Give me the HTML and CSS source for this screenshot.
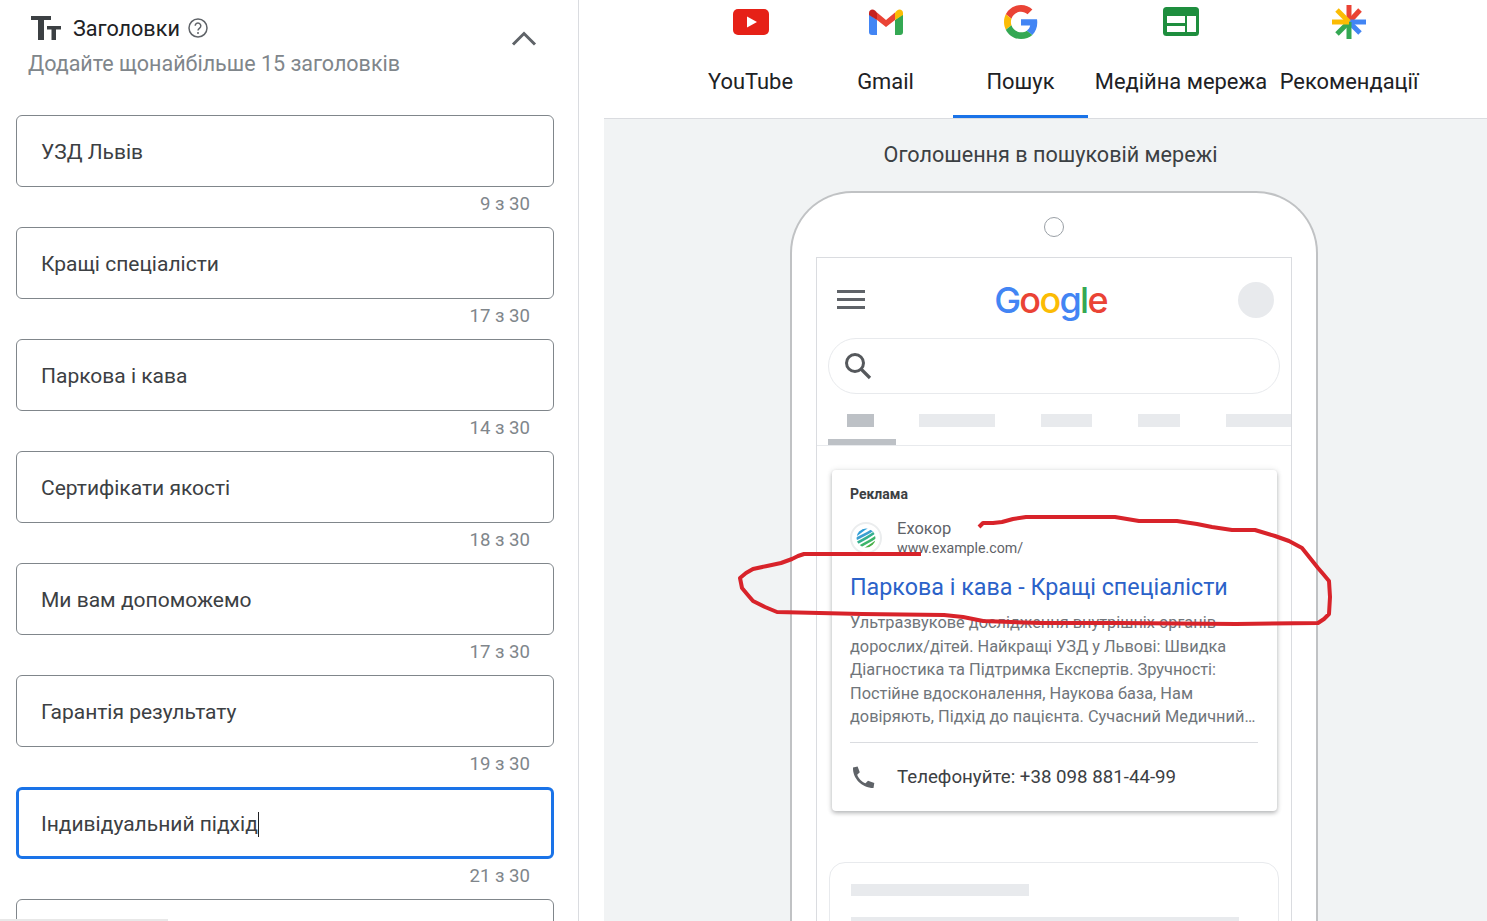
FILE: index.html
```html
<!DOCTYPE html>
<html lang="uk">
<head>
    <meta charset="UTF-8">
    <meta name="viewport" content="width=device-width, initial-scale=1.0">
    <title>Заголовки</title>
    <link rel="stylesheet" href="styles.css">
</head>
<body>

<div class="editor">
    <div class="section-head">
        <div class="section-info">
            <div class="section-title">
                <svg class="title-icon" width="30" height="24" viewBox="0 0 30 24"><path d="M0 0h20v4h-7v20H7V4H0zM16 10h14v3.500h-5V24h-4.500V13.500H16z" fill="#3c4043"/></svg>
                <span>Заголовки</span>
                <svg class="help-icon" width="20" height="20" viewBox="0 0 20 20"><circle cx="10" cy="10" r="9" fill="none" stroke="#5f6368" stroke-width="1.500"/><path d="M7.200 7.800a2.800 2.800 0 1 1 4.400 2.300c-1 .7-1.600 1.200-1.600 2.400" fill="none" stroke="#5f6368" stroke-width="1.500"/><circle cx="10" cy="15" r="1" fill="#5f6368"/></svg>
            </div>
            <div class="section-hint">Додайте щонайбільше 15 заголовків</div>
        </div>
        <svg class="collapse-icon" width="26" height="16" viewBox="0 0 26 16"><path d="M2 14.500 13 3.500l11 11" fill="none" stroke="#5f6368" stroke-width="3"/></svg>
    </div>

    <div class="field">УЗД Львів</div>
    <div class="counter">9 з 30</div>
    <div class="field">Кращі спеціалісти</div>
    <div class="counter">17 з 30</div>
    <div class="field">Паркова і кава</div>
    <div class="counter">14 з 30</div>
    <div class="field">Сертифікати якості</div>
    <div class="counter">18 з 30</div>
    <div class="field">Ми вам допоможемо</div>
    <div class="counter">17 з 30</div>
    <div class="field">Гарантія результату</div>
    <div class="counter">19 з 30</div>
    <div class="field field-active"><span class="caret">Індивідуальний підхід</span></div>
    <div class="counter">21 з 30</div>
    <div class="field"></div>
</div>
<div class="edge-bar"></div>

<div class="preview">
    <div class="tabs">
        <div class="tab">
            <svg width="36" height="26" viewBox="0 0 36 26"><rect width="36" height="26" rx="5" fill="#e62117"/><path d="M14 7.500 24 13l-10 5.500z" fill="#fff"/></svg>
            <span>YouTube</span>
        </div>
        <div class="tab">
            <svg width="34" height="26" viewBox="0 0 34 26"><path d="M0 5v18a3 3 0 0 0 3 3h5V11z" fill="#4285f4"/><path d="M34 5v18a3 3 0 0 1-3 3h-5V11z" fill="#34a853"/><path d="M8 3.500 17 11l9-7.500V11l-9 7-9-7z" fill="#ea4335"/><path d="M26 3.500 28 1.500C30.500-.8 34 .8 34 4v2l-8 5z" fill="#fbbc04"/><path d="M8 3.500 6 1.500C3.500-.8 0 .8 0 4v2l8 5z" fill="#c5221f"/></svg>
            <span>Gmail</span>
        </div>
        <div class="tab tab-active">
            <svg class="tab-g" width="34" height="34" viewBox="0 0 48 48"><path d="M24 9.500c3.540 0 6.710 1.220 9.210 3.600l6.850-6.850C35.900 2.380 30.470 0 24 0 14.620 0 6.510 5.380 2.560 13.220l7.980 6.190C12.430 13.720 17.740 9.500 24 9.500z" fill="#ea4335"/><path d="M46.980 24.550c0-1.570-.15-3.090-.38-4.550H24v9.020h12.940c-.58 2.960-2.260 5.480-4.780 7.180l7.730 6c4.510-4.180 7.090-10.360 7.090-17.650z" fill="#4285f4"/><path d="M10.530 28.590c-.48-1.450-.76-2.990-.76-4.590s.27-3.140.76-4.590l-7.980-6.190C.92 16.460 0 20.120 0 24c0 3.880.92 7.540 2.560 10.780l7.970-6.190z" fill="#fbbc05"/><path d="M24 48c6.480 0 11.930-2.130 16.020-5.810l-7.730-6c-2.150 1.450-4.920 2.300-8.290 2.300-6.260 0-11.570-4.220-13.470-9.910l-7.980 6.190C6.510 42.620 14.620 48 24 48z" fill="#34a853"/></svg>
            <span>Пошук</span>
        </div>
        <div class="tab tab-wide">
            <svg width="36" height="29" viewBox="0 0 36 29"><rect width="36" height="29" rx="3.500" fill="#1e8e3e"/><path d="M4 9h18v7H4zM4 19h18v6H4zM24 9h9v16h-9z" fill="#fff"/></svg>
            <span>Медійна мережа</span>
        </div>
        <div class="tab tab-reco">
            <svg width="36" height="36" viewBox="0 0 36 36" stroke-width="5"><path d="M18 18V1" stroke="#ea4335"/><path d="M18 18 29 6" stroke="#ea4335"/><path d="M18 18h17" stroke="#4285f4"/><path d="M18 18l11 11" stroke="#4285f4"/><path d="M18 18v17" stroke="#34a853"/><path d="M18 18 6 30" stroke="#34a853"/><path d="M18 18H1" stroke="#fbbc04"/><path d="M18 18 6 6" stroke="#fbbc04"/></svg>
            <span>Рекомендації</span>
        </div>
    </div>

    <div class="stage">
        <div class="stage-title">Оголошення в пошуковій мережі</div>
        <div class="phone">
            <div class="camera"></div>
            <div class="screen">
                <div class="top-bar">
                    <div class="burger"><i></i><i></i><i></i></div>
                    <div class="google-logo"><b class="c-blue">G</b><b class="c-red">o</b><b class="c-yellow">o</b><b class="c-blue">g</b><b class="c-green">l</b><b class="c-red">e</b></div>
                    <div class="avatar"></div>
                </div>
                <div class="search-box">
                    <svg width="30" height="30" viewBox="0 0 30 30"><circle cx="12" cy="12" r="8.500" fill="none" stroke="#55585c" stroke-width="3"/><path d="M18 18l9 9" stroke="#55585c" stroke-width="3.200"/></svg>
                </div>
                <div class="chips">
                    <i class="chip chip-on"></i>
                    <i class="chip chip-2"></i>
                    <i class="chip chip-3"></i>
                    <i class="chip chip-4"></i>
                    <i class="chip chip-5"></i>
                </div>
                <div class="chip-line"><i></i></div>

                <div class="ad-card">
                    <div class="ad-label">Реклама</div>
                    <div class="ad-source">
                        <div class="ad-logo">
                            <svg width="20" height="20" viewBox="0 0 20 20">
                                <defs><clipPath id="ball"><circle cx="10" cy="10" r="9.500"/></clipPath></defs>
                                <g clip-path="url(#ball)" fill="none" stroke-width="2.600">
                                    <path d="M0 7C4 5 7 1 12-1" stroke="#2f9fd8"/>
                                    <path d="M0 11C6 8 11 6 20 0" stroke="#3a9fd0"/>
                                    <path d="M1 15C7 12 13 9 21 3" stroke="#35b08f"/>
                                    <path d="M3 19C9 15 15 13 21 8" stroke="#3cb56a"/>
                                    <path d="M9 21C13 18 17 16 21 13" stroke="#4ab04a"/>
                                </g>
                            </svg>
                        </div>
                        <div>
                            <div class="ad-name">Ехокор</div>
                            <div class="ad-url">www.example.com/</div>
                        </div>
                    </div>
                    <div class="ad-headline">Паркова і кава - Кращі спеціалісти</div>
                    <div class="ad-text">Ультразвукове дослідження внутрішніх органів дорослих/дітей. Найкращі УЗД у Львові: Швидка Діагностика та Підтримка Експертів. Зручності: Постійне вдосконалення, Наукова база, Нам довіряють, Підхід до пацієнта. Сучасний Медичний…</div>
                    <div class="ad-call">
                        <svg width="24" height="24" viewBox="0 0 24 24"><path d="M6.600 1.500 2 2.500C1.500 13 10.500 23 22.500 23l.8-5-6.300-2.300-2.500 2.500C11 17 7.500 13.500 6.200 9.700l2.600-2.500z" fill="#5f6368"/></svg>
                        <span>Телефонуйте: +38 098 881-44-99</span>
                    </div>
                </div>

                <div class="ghost-card">
                    <i class="ghost-line ghost-short"></i>
                    <i class="ghost-line"></i>
                </div>
            </div>
        </div>
    </div>
</div>

<!-- hand drawn mark on top of the ad -->
<svg class="scribble" width="1487" height="921" viewBox="0 0 1487 921"><path d="M979 527l4-4 10 0 9-1 11-3 13-2 35 0 54 0 12 2 12 2 38 0 20 3 15 3 20 3 23 0 20 6 14 5 13 7 8 10 4 5 4 5 6 7 5 6 1 16-1 17-5 5-6 4-82 1-117-1-78 0-30-1-28-1-20-4-19-2-82-1-85-2-12-5-12-6-6-7-5-6-2-10 6-5 7-4 14-3 14-3 11-4 6-3 6-2 117 0" fill="none" stroke="#d8232a" stroke-width="4" stroke-linejoin="round"/></svg>

</body>
</html>
```
FILE: styles.css
```css
* {
    box-sizing: border-box;
}

html, body {
    height: 100%;
}

body {
    margin: 0;
    height: 921px;
    overflow: hidden;
    display: flex;
    background-color: #fff;
    font-family: Roboto, sans-serif;
    color: #3c4043;
}

/* left column */
.editor {
    width: 579px;
    flex-shrink: 0;
    height: 921px;
    overflow: hidden;
    padding: 0 24px 0 16px;
    border-right: 1px solid #dadce0;
}

.section-head {
    height: 115px;
    padding: 14px 17px 0 12px;
    display: flex;
    justify-content: space-between;
    align-items: flex-start;
}

.section-title {
    display: flex;
    align-items: center;
    gap: 8px;
    height: 28px;
    padding-left: 3px;
    font-size: 21.600px;
    color: #202124;
}

.title-icon {
    margin-right: 4px;
}

.section-hint {
    margin-top: 9px;
    font-size: 21.500px;
    color: #80868b;
}

.collapse-icon {
    margin-top: 16px;
}

.field {
    height: 72px;
    padding: 2px 0 0 24px;
    display: flex;
    align-items: center;
    border: 1px solid #80868b;
    border-radius: 6px;
    font-size: 21px;
}

.field-active {
    border: 3px solid #1a73e8;
    padding-left: 22px;
}

.caret {
    border-right: 1px solid #202124;
    line-height: 25px;
}

.counter {
    height: 40px;
    padding: 6px 24px 0 0;
    text-align: right;
    font-size: 18.600px;
    color: #80868b;
}

.edge-bar {
    position: absolute;
    left: 0;
    bottom: 0;
    width: 168px;
    height: 2px;
    background-color: #e8e8e8;
}

/* right column */
.preview {
    margin-left: 25px;
    flex: 1;
    height: 921px;
    display: flex;
    flex-direction: column;
    min-width: 0;
}

.tabs {
    height: 119px;
    flex-shrink: 0;
    padding-left: 79px;
    display: flex;
    background-color: #fff;
    border-bottom: 1px solid #dadce0;
}

.tab {
    width: 135px;
    height: 118px;
    position: relative;
    display: flex;
    flex-direction: column;
    align-items: center;
    padding-top: 9px;
    font-size: 21.900px;
    color: #202124;
}

.tab svg {
    flex-shrink: 0;
}

.tab span {
    position: absolute;
    top: 69px;
    white-space: nowrap;
}

.tab-active {
    border-bottom: 3px solid #1a73e8;
    padding-top: 5px;
}

.tab-wide {
    width: 186px;
    padding-top: 7px;
}

.tab-reco {
    width: 150px;
    padding-top: 4px;
}

.stage {
    flex: 1;
    background-color: #f1f3f4;
    min-height: 0;
}

.stage-title {
    height: 72px;
    padding: 23px 0 0 10px;
    text-align: center;
    font-size: 21.600px;
    color: #3c4043;
}

.phone {
    width: 528px;
    height: 760px;
    margin-left: 186px;
    padding: 0 25px;
    background-color: #fff;
    border: 2px solid #c0c2c4;
    border-bottom: 0;
    border-radius: 62px 62px 0 0;
}

.camera {
    width: 20px;
    height: 20px;
    margin: 24px 0 20px 227px;
    border: 1px solid #9aa0a6;
    border-radius: 50%;
}

.screen {
    width: 476px;
    height: 700px;
    margin-left: -1px;
    border: 1px solid #dadce0;
    border-bottom: 0;
    overflow: hidden;
}

.top-bar {
    height: 80px;
    padding: 3px 17px 0 20px;
    display: flex;
    align-items: center;
    justify-content: space-between;
}

.burger {
    width: 28px;
    display: flex;
    flex-direction: column;
    gap: 5px;
}

.burger i {
    display: block;
    height: 3px;
    background-color: #5f6368;
}

.google-logo {
    font-family: Inter, sans-serif;
    font-size: 36px;
    line-height: 40px;
    letter-spacing: -1.700px;
    margin-left: -2px;
}

.google-logo b {
    font-weight: 500;
}

.c-blue { color: #4285f4; }
.c-red { color: #ea4335; }
.c-yellow { color: #fbbc05; }
.c-green { color: #34a853; }

.avatar {
    width: 36px;
    height: 36px;
    border-radius: 50%;
    background-color: #e8eaed;
}

.search-box {
    width: 452px;
    height: 56px;
    margin-left: 11px;
    padding: 12px 0 0 14px;
    border: 1px solid #e8eaed;
    border-radius: 28px;
}

.chips {
    height: 13px;
    margin-top: 20px;
    display: flex;
    align-items: stretch;
}

.chip {
    display: block;
    background-color: #e8eaed;
}

.chip-on { width: 27px; margin-left: 30px; background-color: #bdc1c6; }
.chip-2 { width: 77px; margin-left: 45px; }
.chip-3 { width: 51px; margin-left: 46px; }
.chip-4 { width: 42px; margin-left: 46px; }
.chip-5 { width: 66px; margin-left: 46px; }

.chip-line {
    height: 19px;
    padding: 12px 0 0 11px;
    border-bottom: 1px solid #e8eaed;
}

.chip-line i {
    display: block;
    width: 68px;
    height: 6px;
    background-color: #bdc1c6;
}

.ad-card {
    width: 445px;
    height: 341px;
    margin: 24px 0 0 15px;
    padding: 16px 19px 0 18px;
    border-radius: 4px;
    background-color: #fff;
    box-shadow: 0 2px 4px rgba(60, 64, 67, 0.35), 0 0 6px rgba(60, 64, 67, 0.1);
}

.ad-label {
    font-size: 14px;
    line-height: 17px;
    font-weight: 700;
    color: #3c4043;
}

.ad-source {
    height: 40px;
    margin-top: 16px;
    display: flex;
    gap: 15px;
    align-items: flex-start;
}

.ad-logo {
    width: 32px;
    height: 32px;
    margin-top: 3px;
    flex-shrink: 0;
    display: flex;
    align-items: center;
    justify-content: center;
    border: 2px solid #ebedee;
    border-radius: 50%;
}

.ad-name {
    font-size: 16.500px;
    line-height: 20px;
    color: #5f6368;
}

.ad-url {
    margin-top: -1px;
    font-size: 14.200px;
    line-height: 20px;
    color: #5f6368;
}

.ad-headline {
    margin-top: 13px;
    font-size: 23.300px;
    line-height: 30px;
    color: #2b62c9;
    white-space: nowrap;
}

.ad-text {
    margin: 9px -6px 0 0;
    font-size: 16.350px;
    line-height: 23.500px;
    color: #70757a;
}

.ad-call {
    margin-top: 13px;
    padding-top: 22px;
    border-top: 1px solid #dadce0;
    display: flex;
    align-items: center;
    gap: 22px;
    font-size: 18.700px;
    color: #3c4043;
}

.ad-call svg {
    margin-left: 1px;
}

.ghost-card {
    width: 450px;
    height: 200px;
    margin: 51px 0 0 12px;
    padding: 21px;
    border: 1px solid #e8eaed;
    border-radius: 16px;
}

.ghost-line {
    display: block;
    height: 12px;
    background-color: #e8eaed;
    margin-bottom: 21px;
}

.ghost-short {
    width: 178px;
}

.ghost-line:not(.ghost-short) {
    width: 388px;
}

/* the red mark lies over everything */
.scribble {
    position: absolute;
    left: 0;
    top: 0;
    pointer-events: none;
}
```
